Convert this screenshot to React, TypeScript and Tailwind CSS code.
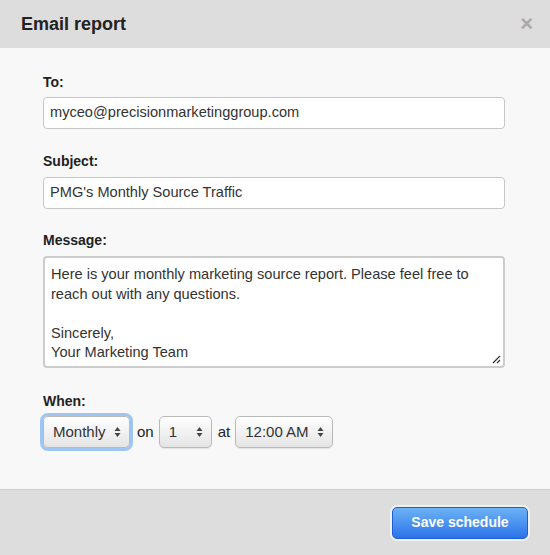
import React from "react";

const font = { fontFamily: '"Liberation Sans", Arial, Helvetica, sans-serif' };

function Arrows() {
  return (
    <svg width="7" height="12" viewBox="0 0 7 12" className="shrink-0">
      <path d="M3.5 1 L6.5 5 L0.5 5 Z" fill="#444" />
      <path d="M3.5 11 L6.5 7 L0.5 7 Z" fill="#444" />
    </svg>
  );
}

function FakeSelect({
  value,
  width,
  focused,
}: {
  value: string;
  width: string;
  focused?: boolean;
}) {
  return (
    <div
      className={`${width} h-[32px] flex items-center justify-between pl-[9px] pr-[8px] rounded-[5px] border border-[#b9b9b9] bg-gradient-to-b from-white to-[#e4e4e4] text-[15px] text-[#333] shadow-[0_1px_1px_rgba(0,0,0,0.08)] ${
        focused ? "outline outline-[3px] outline-[#9fc6f2]" : ""
      }`}
    >
      <span>{value}</span>
      <Arrows />
    </div>
  );
}

export default function App() {
  return (
    <div className="w-[550px] h-[555px] flex flex-col bg-[#f8f8f8]" style={font}>
      {/* header */}
      <div className="h-[48px] shrink-0 bg-[#dddddd] flex items-center justify-between pl-[21px] pr-[17px]">
        <h2 className="text-[18px] font-bold text-[#222]">Email report</h2>
        <span className="text-[22px] font-bold text-[#aaaaaa] leading-none">×</span>
      </div>

      {/* body */}
      <div className="flex-1 px-[43px] pt-[26px]">
        <label className="block text-[14px] leading-[16px] font-bold text-[#222] mb-[7px]">To:</label>
        <div className="w-[462px] h-[32px] flex items-center px-[6px] bg-white border border-[#c6c6c6] rounded-[4px] text-[14.6px] text-[#333]">
          myceo@precisionmarketinggroup.com
        </div>

        <label className="block text-[14px] leading-[16px] font-bold text-[#222] mt-[24px] mb-[8px]">Subject:</label>
        <div className="w-[462px] h-[32px] flex items-center px-[6px] bg-white border border-[#c6c6c6] rounded-[4px] text-[14.6px] text-[#333]">
          PMG's Monthly Source Traffic
        </div>

        <label className="block text-[14px] leading-[16px] font-bold text-[#222] mt-[23px] mb-[8px]">Message:</label>
        <div className="relative w-[462px] h-[112px] px-[6px] pt-[7px] bg-white border-2 border-[#cccccc] rounded-[4px] text-[14.6px] leading-[19.5px] text-[#333]">
          <p>Here is your monthly marketing source report. Please feel free to reach out with any questions.</p>
          <p className="mt-[19.5px]">Sincerely,</p>
          <p>Your Marketing Team</p>
          <svg className="absolute right-[2px] bottom-[2px]" width="9" height="9" viewBox="0 0 9 9">
            <path d="M1 8 L8 1 M5 8 L8 5" stroke="#333" strokeWidth="1.2" />
          </svg>
        </div>

        <label className="block text-[14px] leading-[16px] font-bold text-[#222] mt-[25px] mb-[7px]">When:</label>
        <div className="flex items-center gap-[5px] text-[15px] text-[#222]">
          <FakeSelect value="Monthly" width="w-[87px]" focused />
          <span className="pl-[2px]">on</span>
          <FakeSelect value="1" width="w-[53px]" />
          <span className="pl-[1px]">at</span>
          <FakeSelect value="12:00 AM" width="w-[98px]" />
        </div>
      </div>

      {/* footer */}
      <div className="h-[66px] shrink-0 bg-[#dddddd] border-t border-[#cfcfcf] flex items-center justify-end pr-[22px]">
        <button className="w-[136px] h-[32px] rounded-[5px] border border-[#1f5fd6] bg-gradient-to-b from-[#6cb2f6] to-[#2c73e8] text-white text-[14px] font-bold shadow-[0_0_0_2px_#f0f0f0]">
          Save schedule
        </button>
      </div>
    </div>
  );
}
